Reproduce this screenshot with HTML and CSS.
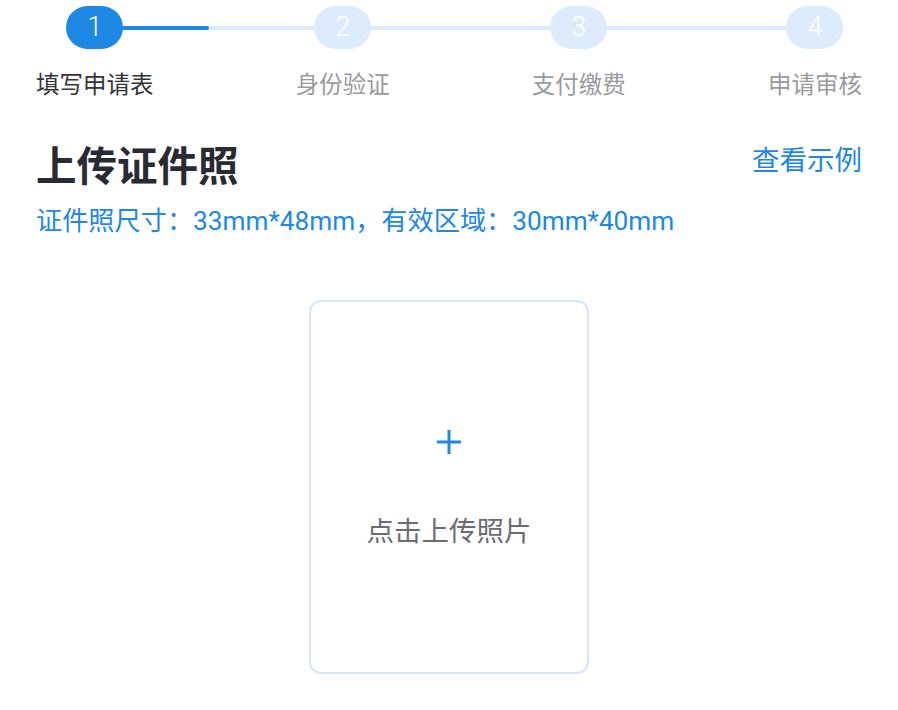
FILE: index.html
```html
<!DOCTYPE html>
<html lang="zh-CN">
  <head>
    <meta charset="UTF-8" />
    <meta name="viewport" content="width=device-width, initial-scale=1.0" />
    <title>上传证件照</title>
    <link rel="stylesheet" href="styles.css">
  </head>
  <body>
    <div class="steps">
      <div class="steps-track">
        <div class="steps-progress"></div>
      </div>
      <div class="step active">
        <span class="step-num">1</span>
        <span class="step-label">填写申请表</span>
      </div>
      <div class="step">
        <span class="step-num">2</span>
        <span class="step-label">身份验证</span>
      </div>
      <div class="step">
        <span class="step-num">3</span>
        <span class="step-label">支付缴费</span>
      </div>
      <div class="step">
        <span class="step-num">4</span>
        <span class="step-label">申请审核</span>
      </div>
    </div>

    <div class="section-head">
      <h1 class="title">上传证件照</h1>
      <a class="link" href="#">查看示例</a>
    </div>
    <p class="hint">证件照尺寸：33mm*48mm，有效区域：30mm*40mm</p>

    <div class="upload-wrap">
      <div class="upload">
        <svg class="plus" width="26" height="26" viewBox="0 0 26 26">
          <path d="M13 1v24M1 13h24" stroke="#1e88e5" stroke-width="3" fill="none" />
        </svg>
        <span class="upload-text">点击上传照片</span>
      </div>
    </div>
  </body>
</html>
```

FILE: styles.css
```css
html,
body {
  font-family: Roboto, "Noto Sans CJK SC", sans-serif;
}

body {
  margin: 0;
  padding: 6px 36px 0;
  background: #fff;
}

.steps {
  position: relative;
  display: flex;
  justify-content: space-between;
}

.steps-track {
  position: absolute;
  top: 20px;
  left: 58px;
  right: 47px;
  height: 4px;
  background: #dcebfb;
}

.steps-progress {
  width: 115px;
  height: 100%;
  background: #1e88e5;
  border-radius: 2px;
}

.step {
  position: relative;
  display: flex;
  flex-direction: column;
  align-items: center;
}

.step-num {
  width: 57px;
  height: 43px;
  border-radius: 22px;
  background: #dcecfd;
  color: #fff;
  font-size: 27px;
  font-weight: 300;
  line-height: 43px;
  text-align: center;
}

.step.active .step-num {
  background: #1e88e5;
}

.step-label {
  margin-top: 20px;
  font-size: 23.5px;
  line-height: 32px;
  color: #9a9a9f;
}

.step.active .step-label {
  color: #333338;
}

.section-head {
  display: flex;
  justify-content: space-between;
  align-items: flex-start;
  margin-top: 40px;
}

.title {
  margin: 0;
  font-size: 40.5px;
  line-height: 52px;
  font-weight: 600;
  color: #2a2a33;
}

.link {
  margin-top: 3px;
  font-size: 27.5px;
  line-height: 34px;
  color: #1e88e5;
  text-decoration: none;
}

.hint {
  margin: 11px 0 0;
  font-size: 26.2px;
  line-height: 34px;
  color: #1e88e5;
}

.upload-wrap {
  display: flex;
  justify-content: center;
  margin-top: 62px;
}

.upload {
  box-sizing: border-box;
  width: 280px;
  height: 374px;
  border: 2px solid #d6e6f8;
  border-radius: 12px;
  display: flex;
  flex-direction: column;
  align-items: center;
  padding-top: 127px;
}

.upload-text {
  margin-top: 59px;
  font-size: 27.5px;
  line-height: 36px;
  color: #6c6c74;
}
```
